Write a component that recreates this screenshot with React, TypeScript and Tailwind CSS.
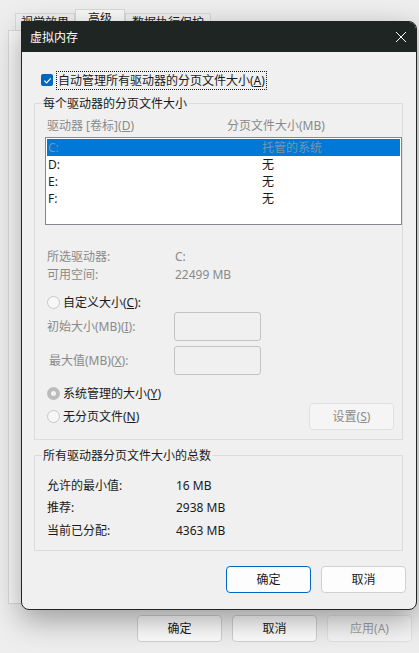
import type { ReactNode } from 'react';

const font = { fontFamily: '"Noto Sans", "Noto Sans CJK SC", sans-serif' };

function Radio({ checked, label }: { checked?: boolean; label: ReactNode }) {
  return (
    <div className="flex items-center h-[17px]">
      {checked ? (
        <span className="w-[13px] h-[13px] rounded-full bg-[#bcbcbc] flex items-center justify-center">
          <span className="w-[5px] h-[5px] rounded-full bg-[#f3f3f3]" />
        </span>
      ) : (
        <span className="w-[13px] h-[13px] rounded-full border border-[#c8c8c8] bg-[#f7f7f7]" />
      )}
      <span className="ml-[3px] text-[#1a1a1a]">{label}</span>
    </div>
  );
}

function Btn({ children, primary, disabled }: { children: ReactNode; primary?: boolean; disabled?: boolean }) {
  return (
    <div
      className={`w-[85px] h-[27px] rounded-[4px] flex items-center justify-center ${
        primary
          ? 'border border-[#0067c0] bg-[#fdfdfd] text-[#1a1a1a]'
          : disabled
          ? 'border border-[#e2e2e2] bg-[#f5f5f5] text-[#9d9d9d]'
          : 'border border-[#d0d0d0] bg-[#fdfdfd] text-[#1a1a1a]'
      }`}
    >
      {children}
    </div>
  );
}

const drives = [
  { d: 'C:', size: '托管的系统' },
  { d: 'D:', size: '无' },
  { d: 'E:', size: '无' },
  { d: 'F:', size: '无' },
];

export default function App() {
  return (
    <div style={font} className="relative w-[419px] h-[653px] overflow-hidden bg-[#eeeeee] text-[12px] leading-[17px]">
      {/* parent window */}
      <div className="flex flex-col h-full pl-[8px] pr-[7px] pt-[10px]">
        <div className="flex items-end h-[20px] pl-[7px] text-[#1a1a1a]">
          <div className="h-[17px] px-[5px] border border-b-0 border-[#d9d9d9] bg-[#f0f0f0]">视觉效果</div>
          <div className="h-[21px] px-[12px] border border-b-0 border-[#d9d9d9] bg-[#f9f9f9]">高级</div>
          <div className="h-[17px] px-[6px] border border-b-0 border-[#d9d9d9] bg-[#f0f0f0]">数据执行保护</div>
        </div>
        <div className="flex-1 border border-[#d9d9d9] bg-[#f9f9f9]" />
        <div className="flex justify-end gap-[10px] pt-[11px] pb-[11px] pr-0">
          <Btn>确定</Btn>
          <Btn>取消</Btn>
          <Btn disabled>应用(A)</Btn>
        </div>
      </div>

      {/* modal dialog */}
      <div className="absolute left-[21px] top-[21px] w-[396px] h-[589px] flex flex-col border border-[#1f2523] rounded-tr-[8px] rounded-b-[8px] overflow-hidden bg-[#f0f0f0] shadow-[0_10px_30px_rgba(0,0,0,0.35)]">
        <div className="h-[30px] shrink-0 bg-[#1f2523] flex items-center justify-between pl-[8px] pr-[9px] text-white">
          <span>虚拟内存</span>
          <svg width="12" height="12" viewBox="0 0 12 12" stroke="#ffffff" strokeWidth="1">
            <path d="M1 1 L11 11 M11 1 L1 11" />
          </svg>
        </div>

        <div className="flex flex-col pl-[12px] pr-[13px] text-[#1a1a1a]">
          <div className="flex items-center h-[18px] mt-[19px] pl-[7px]">
            <span className="w-[12px] h-[12px] rounded-[2px] bg-[#0067c0] flex items-center justify-center">
              <svg width="9" height="9" viewBox="0 0 10 10" fill="none" stroke="#ffffff" strokeWidth="1.3">
                <path d="M1.5 5.2 L4 7.6 L8.6 2.6" />
              </svg>
            </span>
            <span className="ml-[3px] px-[1px] border border-dotted border-[#1a1a1a]">
              自动管理所有驱动器的分页文件大小(<u>A</u>)
            </span>
          </div>

          <fieldset className="mt-[6px] border border-[#dcdcdc] pb-[9px]">
            <legend className="ml-[7px] px-[1px]">每个驱动器的分页文件大小</legend>
            <div className="flex mt-[5px] pl-[12px] text-[#8a8a8a]">
              <span className="w-[180px]">驱动器 [卷标](<u>D</u>)</span>
              <span>分页文件大小(MB)</span>
            </div>
            <div className="mt-[3px] ml-[10px] h-[88px] border border-[#828790] bg-white p-[1px]">
              {drives.map((r, i) => (
                <div
                  key={r.d}
                  className={`flex h-[17px] pl-[1px] ${i === 0 ? 'bg-[#0078d7] text-[#7d93a8]' : 'text-[#1a1a1a]'}`}
                >
                  <span className="w-[214px]">{r.d}</span>
                  <span>{r.size}</span>
                </div>
              ))}
            </div>

            <div className="mt-[22px] pl-[12px] text-[#8a8a8a]">
              <div className="flex h-[18px] items-center">
                <span className="w-[128px]">所选驱动器:</span>
                <span>C:</span>
              </div>
              <div className="flex h-[18px] items-center">
                <span className="w-[128px]">可用空间:</span>
                <span>22499 MB</span>
              </div>
            </div>

            <div className="mt-[11px] pl-[12px]">
              <Radio label={<>自定义大小(<u>C</u>):</>} />
            </div>
            <div className="flex items-center mt-[1px] pl-[12px] text-[#8a8a8a]">
              <span className="w-[127px]">初始大小(MB)(<u>I</u>):</span>
              <span className="w-[87px] h-[29px] rounded-[3px] border border-[#c3c3c3] bg-[#f0f0f0]" />
            </div>
            <div className="flex items-center mt-[5px] pl-[14px] text-[#8a8a8a]">
              <span className="w-[125px]">最大值(MB)(<u>X</u>):</span>
              <span className="w-[87px] h-[29px] rounded-[3px] border border-[#c3c3c3] bg-[#f0f0f0]" />
            </div>

            <div className="mt-[10px] pl-[12px]">
              <Radio checked label={<>系统管理的大小(<u>Y</u>)</>} />
            </div>
            <div className="flex items-center justify-between mt-[1px] pl-[12px] pr-[8px] h-[27px]">
              <Radio label={<>无分页文件(<u>N</u>)</>} />
              <div className="w-[85px] h-[27px] rounded-[4px] border border-[#e0e0e0] bg-[#f5f5f5] text-[#8a8a8a] flex items-center justify-center">
                设置(<u>S</u>)
              </div>
            </div>
          </fieldset>

          <fieldset className="mt-[7px] border border-[#dcdcdc] pb-[8px]">
            <legend className="ml-[7px] px-[1px]">所有驱动器分页文件大小的总数</legend>
            <div className="mt-[10px] pl-[12px]">
              {[
                ['允许的最小值:', '16 MB'],
                ['推荐:', '2938 MB'],
                ['当前已分配:', '4363 MB'],
              ].map(([k, v]) => (
                <div key={k} className="flex h-[22.5px] items-center">
                  <span className="w-[129px]">{k}</span>
                  <span>{v}</span>
                </div>
              ))}
            </div>
          </fieldset>

          <div className="flex justify-end gap-[10px] mt-[15px] -mr-[3px]">
            <Btn primary>确定</Btn>
            <Btn>取消</Btn>
          </div>
        </div>
      </div>
    </div>
  );
}
